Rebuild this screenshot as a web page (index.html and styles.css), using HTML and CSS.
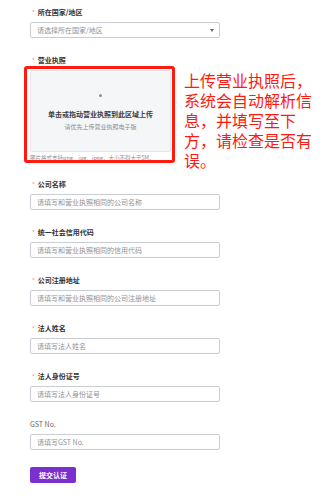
FILE: index.html
```html
<!DOCTYPE html>
<html lang="zh-CN">
<head>
<meta charset="utf-8">
<link rel="stylesheet" href="styles.css">
</head>
<body>
<form class="form">
  <div class="field">
    <div class="label"><span class="req">*</span>所在国家/地区</div>
    <div class="input select"><span class="ph">请选择所在国家/地区</span><span class="arrow"></span></div>
  </div>
  <div class="field">
    <div class="label"><span class="req">*</span>营业执照</div>
    <div class="upload-wrap">
      <div class="upload">
        <span class="dot"></span>
        <div class="up-title">单击或拖动营业执照到此区域上传</div>
        <div class="up-sub">请优先上传营业执照电子版</div>
      </div>
      <div class="hint">图片格式支持png、jpg、jpeg，大小不得大于5M。</div>
      <div class="frame"></div>
      <div class="note">上传营业执照后，系统会自动解析信息，并填写至下方，请检查是否有误。</div>
    </div>
  </div>
  <div class="field">
    <div class="label"><span class="req">*</span>公司名称</div>
    <div class="input"><span class="ph">请填写和营业执照相同的公司名称</span></div>
  </div>
  <div class="field">
    <div class="label"><span class="req">*</span>统一社会信用代码</div>
    <div class="input"><span class="ph">请填写和营业执照相同的信用代码</span></div>
  </div>
  <div class="field">
    <div class="label"><span class="req">*</span>公司注册地址</div>
    <div class="input"><span class="ph">请填写和营业执照相同的公司注册地址</span></div>
  </div>
  <div class="field">
    <div class="label"><span class="req">*</span>法人姓名</div>
    <div class="input"><span class="ph">请填写法人姓名</span></div>
  </div>
  <div class="field">
    <div class="label"><span class="req">*</span>法人身份证号</div>
    <div class="input"><span class="ph">请填写法人身份证号</span></div>
  </div>
  <div class="field">
    <div class="label plain">GST No.</div>
    <div class="input"><span class="ph">请填写GST No.</span></div>
  </div>
  <div class="actions">
    <span class="btn">提交认证</span>
  </div>
</form>
</body>
</html>
```

FILE: styles.css
```css
html, body {
  margin: 0;
  padding: 0;
  background: #ffffff;
}
body {
  font-family: "Noto Sans CJK SC", "Noto Sans", sans-serif;
  width: 333px;
  height: 503px;
  overflow: hidden;
}
.form {
  display: flex;
  flex-direction: column;
  gap: 17px;
  padding: 7px 0 0 30px;
  width: 190px;
}
.field {
  display: flex;
  flex-direction: column;
  gap: 5px;
}
.label {
  height: 10px;
  line-height: 10px;
  font-size: 7px;
  font-weight: 700;
  color: #333333;
  white-space: nowrap;
}
.label .req {
  color: #f08a8a;
  font-weight: 400;
  font-size: 6px;
  margin: 0 3px 0 2px;
}
.label.plain {
  font-weight: 400;
  color: #666666;
}
.input {
  box-sizing: border-box;
  height: 16px;
  width: 190px;
  border: 1px solid #c9ccd2;
  border-radius: 2px;
  display: flex;
  align-items: center;
  padding: 0 6px;
  font-size: 7px;
  background: #ffffff;
}
.ph {
  color: #8f9198;
  white-space: nowrap;
}
.select {
  justify-content: space-between;
}
.arrow {
  width: 0;
  height: 0;
  border-left: 2.5px solid transparent;
  border-right: 2.5px solid transparent;
  border-top: 3px solid #666666;
  margin-right: -1px;
}
.upload-wrap {
  position: relative;
  display: flex;
  flex-direction: column;
  gap: 2px;
}
.upload {
  box-sizing: border-box;
  width: 141px;
  height: 82px;
  background: #f5f6f8;
  border: 1px solid #e3e5e9;
  border-radius: 2px;
  display: flex;
  flex-direction: column;
  align-items: center;
}
.dot {
  width: 3px;
  height: 3px;
  border-radius: 50%;
  background: #8e9096;
  margin-top: 23px;
}
.up-title {
  margin-top: 13px;
  font-size: 7px;
  font-weight: 700;
  color: #3a3c42;
  line-height: 9px;
  white-space: nowrap;
}
.up-sub {
  margin-top: 4px;
  font-size: 6px;
  color: #8a8c92;
  line-height: 8px;
  white-space: nowrap;
}
.hint {
  font-size: 5.5px;
  line-height: 8px;
  color: #8a8c92;
  white-space: nowrap;
}
.frame {
  position: absolute;
  left: -6px;
  top: -4px;
  width: 151px;
  height: 97px;
  box-sizing: border-box;
  border: 3px solid #ff1a0f;
  border-radius: 3px;
}
.note {
  position: absolute;
  left: 154px;
  top: 0;
  width: 130px;
  font-size: 16px;
  line-height: 20px;
  color: #ff1a0f;
}
.actions {
  display: flex;
}
.btn {
  box-sizing: border-box;
  width: 46px;
  height: 16px;
  border-radius: 2px;
  background: #7b2fcf;
  color: #ffffff;
  font-size: 7px;
  font-weight: 700;
  display: flex;
  align-items: center;
  justify-content: center;
}
```
